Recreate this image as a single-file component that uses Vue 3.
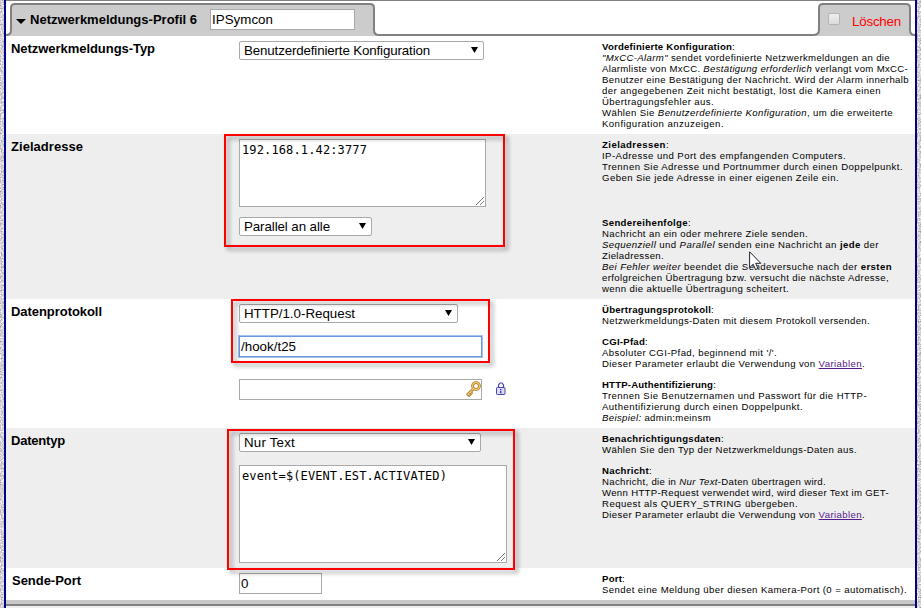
<script setup>
// Spreads a single line of text over the given width with letter-spacing.
const vFit = (el, { value }) => {
  if (!value) return
  el.style.letterSpacing = '0px'
  const natural = el.getBoundingClientRect().width
  el.style.letterSpacing = (value - natural) / el.textContent.length + 'px'
}

const link = '<a href="#">Variablen</a>'

const rows = [
  {
    id: 'type', label: 'Netzwerkmeldungs-Typ', w: 144,
    help: [
      [
        ['<b>Vordefinierte Konfiguration</b>:', 133],
        ['<i>"MxCC-Alarm"</i> sendet vordefinierte Netzwerkmeldungen an die', 288],
        ['Alarmliste von MxCC. <i>Bestätigung erforderlich</i> verlangt vom MxCC-', 306],
        ['Benutzer eine Bestätigung der Nachricht. Wird der Alarm innerhalb', 307],
        ['der angegebenen Zeit nicht bestätigt, löst die Kamera einen', 279],
        ['Übertragungsfehler aus.', 112],
        ['Wählen Sie <i>Benutzerdefinierte Konfiguration</i>, um die erweiterte', 291],
        ['Konfiguration anzuzeigen.', 122],
      ],
    ],
  },
  {
    id: 'target', label: 'Zieladresse', w: 72,
    help: [
      [
        ['<b>Zieladressen</b>:', 67],
        ['IP-Adresse und Port des empfangenden Computers.', 244],
        ['Trennen Sie Adresse und Portnummer durch einen Doppelpunkt.', 301],
        ['Geben Sie jede Adresse in einer eigenen Zeile ein.', 237],
      ],
      [
        ['<b>Sendereihenfolge</b>:', 89],
        ['Nachricht an ein oder mehrere Ziele senden.', 206],
        ['<i>Sequenziell</i> und <i>Parallel</i> senden eine Nachricht an <b>jede</b> der', 277],
        ['Zieladressen.', 62],
        ['<i>Bei Fehler weiter</i> beendet die Sendeversuche nach der <b>ersten</b>', 290],
        ['erfolgreichen Übertragung bzw. versucht die nächste Adresse,', 287],
        ['wenn die aktuelle Übertragung scheitert.', 187],
      ],
    ],
  },
  {
    id: 'protocol', label: 'Datenprotokoll', w: 91,
    help: [
      [
        ['<b>Übertragungsprotokoll</b>:', 112],
        ['Netzwerkmeldungs-Daten mit diesem Protokoll versenden.', 268],
      ],
      [
        ['<b>CGI-Pfad</b>:', 46],
        ["Absoluter CGI-Pfad, beginnend mit '/'.", 175],
        ['Dieser Parameter erlaubt die Verwendung von ' + link + '.', 263],
      ],
      [
        ['<b>HTTP-Authentifizierung</b>:', 114],
        ['Trennen Sie Benutzernamen und Passwort für die HTTP-', 265],
        ['Authentifizierung durch einen Doppelpunkt.', 201],
        ['<i>Beispiel:</i> admin:meinsm', 109],
      ],
    ],
  },
  {
    id: 'data', label: 'Datentyp', w: 54,
    help: [
      [
        ['<b>Benachrichtigungsdaten</b>:', 122],
        ['Wählen Sie den Typ der Netzwerkmeldungs-Daten aus.', 255],
      ],
      [
        ['<b>Nachricht</b>:', 50],
        ['Nachricht, die in <i>Nur Text</i>-Daten übertragen wird.', 224],
        ['Wenn HTTP-Request verwendet wird, wird dieser Text im GET-', 287],
        ['Request als QUERY_STRING übergeben.', 196],
        ['Dieser Parameter erlaubt die Verwendung von ' + link + '.', 263],
      ],
    ],
  },
  {
    id: 'port', label: 'Sende-Port', w: 69,
    help: [
      [
        ['<b>Port</b>:', 23],
        ['Sendet eine Meldung über diesen Kamera-Port (0 = automatisch).', 305],
      ],
    ],
  },
]
</script>

<template>
  <div class="page">
    <svg class="noise" width="921" height="608">
      <filter id="grain" x="0" y="0" width="100%" height="100%" color-interpolation-filters="sRGB">
        <feTurbulence type="fractalNoise" baseFrequency="0.7" numOctaves="2" seed="4" />
        <feColorMatrix values="0.7 0 0 0 0.48  0.7 0 0 0 0.48  0.7 0 0 0 0.49  0 0 0 0 1" />
      </filter>
      <rect width="921" height="608" filter="url(#grain)" />
    </svg>

    <main class="panel">
      <header class="head">
        <svg class="tabs" width="909" height="36" viewBox="6 0 909 36">
          <path class="tab-fill" d="M6 36V35Q11 35 11 30V8Q11 4 15 4H370Q374 4 374 8V30Q374 35 379 36Z" />
          <path class="tab-fill" d="M813 36Q819 35 819 30V8Q819 4 823 4H906Q910 4 910 8V30Q910 35 915 36Z" />
          <path class="tab-line" d="M6 35Q11 35 11 30V8Q11 4 15 4H370Q374 4 374 8V30Q374 35 379 35H813Q819 35 819 30V8Q819 4 823 4H906Q910 4 910 8V30Q910 35 915 35" />
          <path class="top-line" d="M6 .5H915" />
        </svg>
        <svg class="toggle" width="10" height="5" viewBox="0 0 10 5"><path d="M0 0H10L5 5Z" /></svg>
        <h1 class="title"><span v-fit="167">Netzwerkmeldungs-Profil 6</span></h1>
        <div class="input name"><span v-fit="61">IPSymcon</span></div>
        <label class="delete">
          <i class="check"></i>
          <span v-fit="49">Löschen</span>
        </label>
      </header>

      <section v-for="row in rows" :key="row.id" class="row" :class="row.id">
        <div class="label"><span v-fit="row.w">{{ row.label }}</span></div>

        <div class="controls">
          <template v-if="row.id === 'type'">
            <div class="select s-type"><span v-fit="186">Benutzerdefinierte Konfiguration</span><svg class="arrow" viewBox="0 0 7 6"><path d="M0 0H7L3.5 6Z" /></svg></div>
          </template>

          <template v-else-if="row.id === 'target'">
            <div class="area a-target"><span v-fit="125">192.168.1.42:3777</span><svg class="grip" viewBox="0 0 8 8"><path d="M0 8L8 0M4 8L8 4" /></svg></div>
            <div class="select s-order"><span v-fit="86">Parallel an alle</span><svg class="arrow" viewBox="0 0 7 6"><path d="M0 0H7L3.5 6Z" /></svg></div>
          </template>

          <template v-else-if="row.id === 'protocol'">
            <div class="select s-proto"><span v-fit="111">HTTP/1.0-Request</span><svg class="arrow" viewBox="0 0 7 6"><path d="M0 0H7L3.5 6Z" /></svg></div>
            <div class="input path"><span v-fit="55">/hook/t25</span></div>
            <div class="auth">
              <div class="input secret">
                <svg class="key" width="16" height="17" viewBox="0 0 16 17">
                  <path class="key-edge" d="M8.8 7.4L2 14.2M2.6 12.6L5.2 15.2M5 10.8L7.2 13" />
                  <circle class="ring-edge" cx="11" cy="5" r="3.4" />
                  <path class="key-body" d="M8.8 7.4L2.4 13.8M3.2 12.8L5 14.6M5 10.8L6.8 12.6" />
                  <circle class="ring" cx="11" cy="5" r="3.4" />
                </svg>
              </div>
              <svg class="lock" width="10" height="13" viewBox="0 0 10 13">
                <path d="M2.5 6V3L4 1H6L7.5 3V6" fill="none" stroke="#4545b0" stroke-width="1.2" />
                <rect x=".5" y="5.5" width="8.5" height="7" rx=".8" fill="#dcdcf8" stroke="#4545b0" />
                <path d="M4 7H5.4V8.2H4ZM4 9H5.4V11.2H4Z" fill="#3b3ba8" />
              </svg>
            </div>
          </template>

          <template v-else-if="row.id === 'data'">
            <div class="select s-data"><span v-fit="51">Nur Text</span><svg class="arrow" viewBox="0 0 7 6"><path d="M0 0H7L3.5 6Z" /></svg></div>
            <div class="area a-data"><span v-fit="205">event=$(EVENT.EST.ACTIVATED)</span><svg class="grip" viewBox="0 0 8 8"><path d="M0 8L8 0M4 8L8 4" /></svg></div>
          </template>

          <div v-else class="input port-no"><span>0</span></div>
        </div>

        <div class="help">
          <div v-for="(block, b) in row.help" :key="b" class="block">
            <div v-for="(line, l) in block" :key="l" class="line"><span v-fit="line[1]" v-html="line[0]"></span></div>
          </div>
        </div>
      </section>

      <footer class="foot"></footer>
    </main>

    <div class="mark m1"></div>
    <div class="mark m2"></div>
    <div class="mark m3"></div>
    <svg class="cursor" width="13" height="20" viewBox="0 0 13 20">
      <path d="M.6 .8V16.6L4.2 13.2L6.6 18.6L9 17.5L6.7 12.3H11.8Z" />
    </svg>
  </div>
</template>

<style>
body {
  margin: 0;
  overflow: hidden;
}
</style>

<style scoped>
.page {
  position: relative;
  width: 921px;
  height: 608px;
  overflow: hidden;
  background: #d8d8da;
  font-family: "Liberation Sans", Arial, sans-serif;
  font-size: 13.33px;
  color: #000;
}
.page * {
  box-sizing: border-box;
}
.page span {
  display: inline-block;
  white-space: pre;
}
.noise {
  position: absolute;
  inset: 0;
}
.panel {
  position: relative;
  width: 913px;
  height: 608px;
  margin-left: 4px;
  border: solid #00008b;
  border-width: 0 2px;
  background: #fff;
}
.head {
  position: relative;
  display: flex;
  height: 36px;
  align-items: flex-start;
}
.tabs {
  position: absolute;
  left: 0;
  top: 0;
}
.tab-fill {
  fill: #ccc;
}
.tab-line {
  fill: none;
  stroke: #808080;
  stroke-width: 2;
}
.top-line {
  stroke: #808080;
}
.toggle,
.title,
.name,
.delete {
  position: relative;
}
.toggle {
  margin: 19px 0 0 10px;
}
.title {
  width: 180px;
  margin: 12px 0 0 4px;
  font-size: 13px;
  line-height: 15px;
}
.delete {
  display: flex;
  margin: 13px 14px 0 auto;
  color: #f00;
  line-height: 18px;
}
.check {
  width: 12px;
  height: 12px;
  margin-right: 12px;
  border: 1px solid #b4b4b4;
  border-radius: 2px;
  background: linear-gradient(#eee, #dcdcdc);
}
.row {
  display: grid;
  grid-template-columns: 233px 363px 1fr;
}
.type { height: 98px; }
.target { height: 165px; }
.protocol { height: 129px; }
.data { height: 140px; }
.port { height: 32px; }
.target,
.data {
  background: #eee;
}
.label {
  padding: 5px 0 0 5px;
  font-size: 13px;
  font-weight: bold;
  line-height: 15px;
}
.port .label {
  padding-left: 6px;
}
.controls {
  padding-top: 5px;
}
.select {
  display: flex;
  align-items: flex-start;
  justify-content: space-between;
  height: 19px;
  padding: 1px 5px 0 4px;
  border: 1px solid #a9a9a9;
  border-radius: 2px;
  background: #fff;
  line-height: 15px;
}
.arrow {
  width: 7px;
  height: 6px;
  margin-top: 4px;
}
.s-type { width: 245px; }
.s-order { width: 133px; margin-top: 10px; }
.s-proto { width: 219px; }
.s-data { width: 242px; }
.input {
  height: 21px;
  padding: 2px 0 0 1px;
  border: 1px solid #a9a9a9;
  background: #fff;
  line-height: 15px;
}
.name {
  width: 145px;
  margin-top: 9px;
}
.path {
  width: 243px;
  margin-top: 13px;
  border-color: #6a96e0;
  box-shadow: 0 0 0 1px #a5c3f2;
}
.auth {
  display: flex;
  margin-top: 22px;
}
.secret {
  display: flex;
  justify-content: flex-end;
  width: 243px;
  padding: 1px 0 0;
}
.lock {
  margin: 3px 0 0 14px;
}
.key path,
.key circle {
  fill: none;
}
.key .key-edge,
.key .ring-edge {
  stroke: #9c6f2c;
  stroke-width: 2.8;
}
.key .key-body,
.key .ring {
  stroke: #f8d26a;
  stroke-width: 1.2;
}
.port-no {
  width: 83px;
}
.area {
  position: relative;
  padding: 3px 0 0 2px;
  border: 1px solid #a9a9a9;
  background: #fff;
  font-family: "DejaVu Sans Mono", monospace;
  font-size: 12px;
  line-height: 15px;
}
.a-target {
  width: 247px;
  height: 68px;
}
.a-data {
  width: 268px;
  height: 98px;
  margin-top: 13px;
}
.grip {
  position: absolute;
  right: 1px;
  bottom: 1px;
  width: 8px;
  height: 8px;
  stroke: #666;
  stroke-width: 0.9;
}
.help {
  padding-top: 5px;
  font-size: 9.6px;
  line-height: 11px;
}
.block {
  margin-bottom: 10px;
}
.target .block:first-child {
  margin-bottom: 34px;
}
.line {
  height: 11px;
}
.port .block {
  margin-bottom: 0;
}
.line :deep(a) {
  color: #551a8b;
}
.foot {
  height: 8px;
  border-top: 4px solid #c8c8c8;
  background: linear-gradient(#808080 2px, #eee 2px);
}
.mark {
  position: absolute;
  border: 2px solid #f00;
  filter: drop-shadow(3px 3px 2px rgba(0, 0, 0, 0.4));
}
.m1 { left: 224px; top: 134px; width: 281px; height: 113px; }
.m2 { left: 231px; top: 299px; width: 259px; height: 64px; }
.m3 { left: 227px; top: 429px; width: 288px; height: 141px; }
.cursor {
  position: absolute;
  left: 749px;
  top: 251px;
  fill: #fff;
  stroke: #223;
  stroke-width: 1;
}
</style>
